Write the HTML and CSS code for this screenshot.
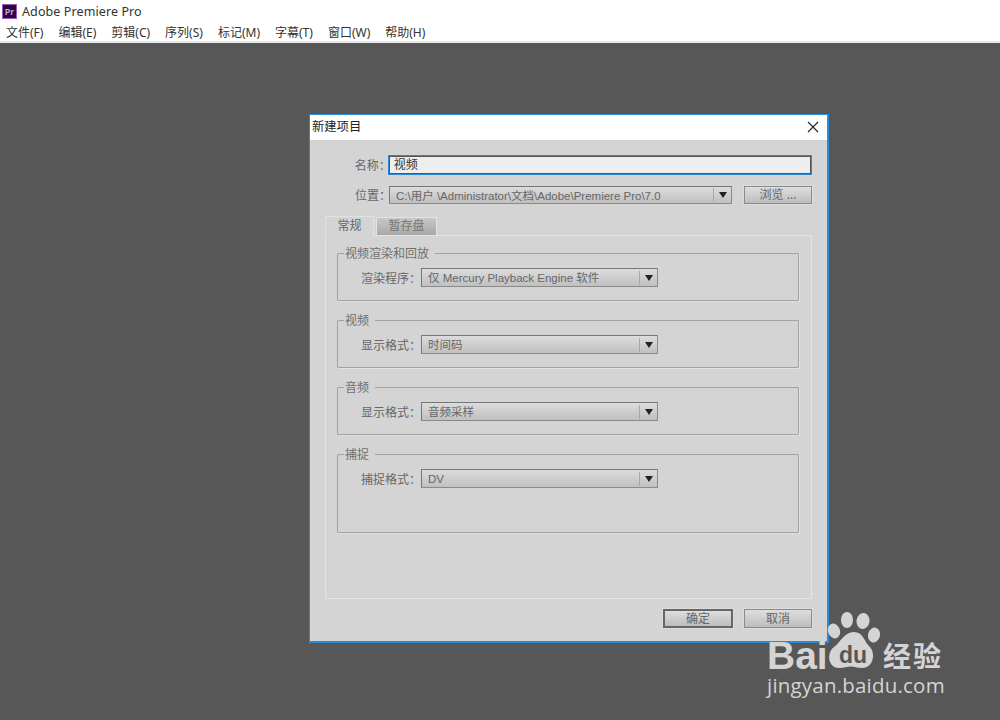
FILE: index.html
```html
<!DOCTYPE html>
<html lang="zh-CN">
<head>
<meta charset="utf-8">
<title>Adobe Premiere Pro</title>
<link rel="stylesheet" href="styles.css">
</head>
<body>
<div class="app">
  <header class="titlebar">
    <span class="app-icon">Pr</span>
    <span class="app-title">Adobe Premiere Pro</span>
  </header>
  <nav class="menubar">
    <span>文件(F)</span><span>编辑(E)</span><span>剪辑(C)</span><span>序列(S)</span><span>标记(M)</span><span>字幕(T)</span><span>窗口(W)</span><span>帮助(H)</span>
  </nav>
  <main class="desktop">
    <section class="dialog">
      <div class="dialog-title">
        <span class="dialog-name">新建项目</span>
        <svg class="close" width="12" height="12" viewBox="0 0 12 12"><path d="M1 1L11 11M11 1L1 11" stroke="#222" stroke-width="1.1" fill="none"/></svg>
      </div>
      <div class="dialog-body">
        <div class="row name-row">
          <label class="top-label">名称：</label>
          <div class="text-input">视频</div>
        </div>
        <div class="row loc-row">
          <label class="top-label">位置：</label>
          <div class="select loc-select"><span class="select-text">C:\用户 \Administrator\文档\Adobe\Premiere Pro\7.0</span><i class="arrow"></i></div>
          <button class="btn browse">浏览 ...</button>
        </div>
        <div class="tabs">
          <span class="tab active">常规</span>
          <span class="tab">暂存盘</span>
        </div>
        <div class="panel">
          <fieldset class="group g1">
            <legend>视频渲染和回放</legend>
            <div class="field"><label>渲染程序：</label><div class="select field-select"><span class="select-text">仅 Mercury Playback Engine 软件</span><i class="arrow"></i></div></div>
          </fieldset>
          <fieldset class="group g2">
            <legend>视频</legend>
            <div class="field"><label>显示格式：</label><div class="select field-select"><span class="select-text">时间码</span><i class="arrow"></i></div></div>
          </fieldset>
          <fieldset class="group g2">
            <legend>音频</legend>
            <div class="field"><label>显示格式：</label><div class="select field-select"><span class="select-text">音频采样</span><i class="arrow"></i></div></div>
          </fieldset>
          <fieldset class="group g4">
            <legend>捕捉</legend>
            <div class="field"><label>捕捉格式：</label><div class="select field-select"><span class="select-text">DV</span><i class="arrow"></i></div></div>
          </fieldset>
        </div>
        <div class="actions">
          <button class="btn ok">确定</button>
          <button class="btn cancel">取消</button>
        </div>
      </div>
    </section>
    <div class="watermark">
      <div class="wm-logo">
        <span class="wm-bai">Bai</span>
        <svg class="wm-paw" width="56" height="60" viewBox="0 0 56 60">
          <ellipse cx="7" cy="19" rx="6" ry="7.5" fill="#d4d4d4" transform="rotate(-18 7 19)"/>
          <ellipse cx="20" cy="8" rx="6" ry="8" fill="#d4d4d4"/>
          <ellipse cx="36" cy="9" rx="6.5" ry="8" fill="#d4d4d4" transform="rotate(8 36 9)"/>
          <ellipse cx="47" cy="23" rx="6" ry="7.5" fill="#d4d4d4" transform="rotate(15 47 23)"/>
          <path d="M27 20C36 20 37 29 42 34C49 40 47 56 35 56C30 56 27 54.500 24 54.500C20 54.500 17 56 12 56C1 56 -1 41 7 35C14 30 17 20 27 20Z" fill="#d4d4d4"/>
          <text x="26" y="51" class="wm-du">du</text>
        </svg>
        <span class="wm-jy">经验</span>
      </div>
      <div class="wm-url">jingyan.baidu.com</div>
    </div>
  </main>
</div>
</body>
</html>
```
FILE: styles.css
```css
* { box-sizing: border-box; }
html, body { margin: 0; padding: 0; height: 100%; overflow: hidden; }
body { font: 12px "Noto Sans", "Noto Sans CJK SC", sans-serif; color: #222; background: #fff; }
.app { display: flex; flex-direction: column; width: 1000px; height: 720px; }

.titlebar { height: 23px; display: flex; align-items: center; padding: 0 0 0 2px; flex: none; }
.app-icon { width: 15px; height: 15px; background: #2a0a38; border: 1px solid #9a5cc0; color: #d9a6f0; font-size: 9px; line-height: 13px; text-align: center; font-weight: 600; margin-right: 5px; }
.app-title { font-size: 12.500px; color: #333; letter-spacing: .1px; }

.menubar { height: 20px; flex: none; display: flex; gap: 15px; padding: 1px 0 0 6px; align-items: center; font-size: 12px; line-height: 17px; color: #333; white-space: nowrap; border-bottom: 2px solid #e8e8e8; }

.desktop { position: relative; flex: 1; background: #575757; }

.dialog { position: absolute; left: 309px; top: 71px; width: 520px; height: 529px; border: 1px solid #2a8ad6; border-width: 1px 2px 2px 1px; background: #d4d4d4; display: flex; flex-direction: column; }
.dialog-title { height: 25px; background: #fff; flex: none; display: flex; justify-content: space-between; align-items: center; padding: 0 8px 2px 2px; font-size: 12.300px; color: #222; }
.dialog-name { line-height: 16px; }
.close { flex: none; }

.dialog-body { flex: 1; display: flex; flex-direction: column; padding: 15px 15px 0 15px; color: #666; }

.row { display: flex; align-items: center; }
.top-label { width: 66px; margin-right: -3px; text-align: right; color: #666; white-space: nowrap; }
.name-row { height: 20px; }
.text-input { width: 425px; height: 20px; background: #eee; border: 1px solid #2a8ad6; box-shadow: inset 0 0 0 1px #555; padding: 0 5px; line-height: 18px; color: #333; }
.loc-row { height: 18px; margin-top: 11px; }
.loc-select { width: 343px; height: 18px; margin-left: 1px; }
.browse { width: 68px; height: 18px; margin-left: 12px; }

.select { display: flex; align-items: center; justify-content: space-between; border: 1px solid #8a8a8a; border-top-color: #777; border-left-color: #777; background: linear-gradient(#dcdcdc, #c0c0c0); color: #666; white-space: nowrap; overflow: hidden; }
.select-text { padding: 1px 0 0 6px; font: 11.500px/16px "Liberation Sans", "Noto Sans CJK SC", sans-serif; }
.arrow { flex: none; width: 18px; height: 14px; border-left: 1px solid #a8a8a8; position: relative; }
.arrow::after { content: ""; position: absolute; left: 5px; top: 4px; border: 4px solid transparent; border-top: 6px solid #222; border-bottom: 0; }

.btn { font: inherit; color: #666; padding: 0; border: 1px solid #8a8a8a; background: linear-gradient(#dedede, #bdbdbd); box-shadow: 0 0 0 1px #dcdcdc; line-height: 16px; }

.tabs { display: flex; margin-top: 12px; gap: 2px; height: 19px; align-items: flex-end; }
.tab { border: 1px solid #e2e2e2; border-bottom: 0; text-align: center; line-height: 16px; height: 18px; width: 61px; color: #777; background: linear-gradient(#c8c8c8, #a8a8a8); }
.tab.active { width: 49px; height: 20px; line-height: 18px; background: #d4d4d4; color: #666; margin-bottom: -1px; position: relative; z-index: 1; }

.panel { width: 487px; height: 364px; border: 1px solid #e4e4e4; padding: 8px 12px 0 11px; display: flex; flex-direction: column; gap: 10px; }

.group { margin: 0; padding: 0; border: 1px solid #a2a2a2; border-radius: 1px; box-shadow: 1px 1px 0 #e2e2e2; min-width: 0; flex: none; }
.group legend { margin-left: 6px; padding: 2px 6px 0 1px; font-size: 12px; line-height: 16px; color: #6e6e6e; }
.g1, .g2 { height: 57px; }
.g4 { height: 88px; }

.field { display: flex; align-items: center; height: 19px; margin: 6px 0 0 23px; }
.field label { width: 60px; text-align: right; white-space: nowrap; font-size: 12px; color: #666; padding-top: 1px; }
.field-select { width: 237px; height: 19px; }

.actions { display: flex; justify-content: flex-end; gap: 11px; margin-top: 10px; }
.ok { width: 70px; height: 19px; border: 2px solid #666; line-height: 15px; }
.cancel { width: 68px; height: 19px; }

.watermark { position: absolute; left: 767px; top: 584px; width: 190px; color: #d4d4d4; font-family: "Liberation Sans", sans-serif; }
.wm-logo { display: flex; align-items: flex-end; height: 46px; position: relative; }
.wm-bai { font: 700 39px/37px "Liberation Sans", sans-serif; margin-bottom: -1px; }
.wm-paw { position: absolute; left: 60px; top: -15px; }
.wm-du { font: 700 23px "Liberation Sans", sans-serif; fill: #575757; text-anchor: middle; }
.wm-jy { position: absolute; left: 116px; top: 11px; font: 700 28px/34px "Noto Sans CJK SC", sans-serif; letter-spacing: 2px; }
.wm-url { font: 20.500px/24px "Open Sans", sans-serif; white-space: nowrap; letter-spacing: .2px; }
```
